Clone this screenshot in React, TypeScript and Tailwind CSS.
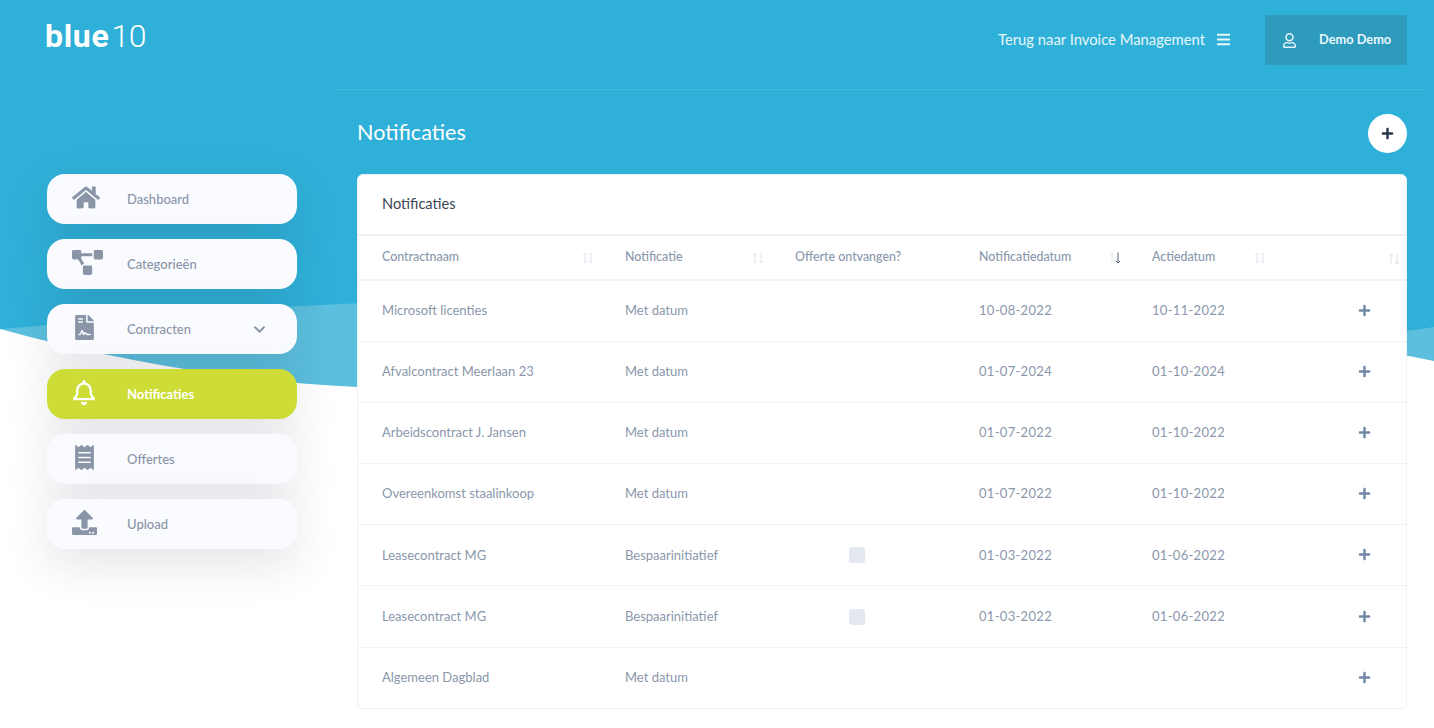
import React from 'react';
import {
  FaBars,
  FaChevronDown,
  FaFileContract,
  FaHome,
  FaPlus,
  FaProjectDiagram,
  FaReceipt,
  FaRegBell,
  FaRegUser,
  FaUpload
} from 'react-icons/fa';

const navItems = [
  { label: 'Dashboard', icon: <FaHome className="h-[25px] w-[28px] shrink-0" /> },
  { label: 'Categorieën', icon: <FaProjectDiagram className="h-[25px] w-[31px] shrink-0" /> },
  { label: 'Contracten', icon: <FaFileContract className="ml-[3px] h-[25px] w-[19px] shrink-0" />, hasChevron: true },
  { label: 'Notificaties', icon: <FaRegBell className="ml-[1px] h-[25px] w-[22px] shrink-0" />, active: true },
  { label: 'Offertes', icon: <FaReceipt className="ml-[3px] h-[25px] w-[19px] shrink-0" /> },
  { label: 'Upload', icon: <FaUpload className="h-[25px] w-[25px] shrink-0" /> }
];

const rows = [
  { name: 'Microsoft licenties', type: 'Met datum', notify: '10-08-2022', action: '10-11-2022' },
  { name: 'Afvalcontract Meerlaan 23', type: 'Met datum', notify: '01-07-2024', action: '01-10-2024' },
  { name: 'Arbeidscontract J. Jansen', type: 'Met datum', notify: '01-07-2022', action: '01-10-2022' },
  { name: 'Overeenkomst staalinkoop', type: 'Met datum', notify: '01-07-2022', action: '01-10-2022' },
  { name: 'Leasecontract MG', type: 'Bespaarinitiatief', quote: true, notify: '01-03-2022', action: '01-06-2022' },
  { name: 'Leasecontract MG', type: 'Bespaarinitiatief', quote: true, notify: '01-03-2022', action: '01-06-2022' },
  { name: 'Algemeen Dagblad', type: 'Met datum', notify: '', action: '' }
];

const SortIcon: React.FC<{ active?: boolean }> = ({ active }) => (
  <svg width="12" height="12" viewBox="0 0 12 12" fill="none" strokeWidth="1">
    <path d="M3 11.5V1M0.8 3.2 3 1l2.2 2.2" stroke="#dfe5ec" />
    <path d="M9 .5V11M6.8 8.8 9 11l2.2-2.2" stroke={active ? '#56657a' : '#dfe5ec'} />
  </svg>
);

const HeaderCell: React.FC<{ label?: string; width: string; sort?: boolean; active?: boolean; padLeft?: string }> = ({
  label,
  width,
  sort = true,
  active,
  padLeft = 'pl-[25px]'
}) => (
  <th className={`${width} p-0 text-left text-[12.4px] font-medium`}>
    <div className={`flex items-center justify-between pr-[6px] ${padLeft}`}>
      <span>{label}</span>
      {sort && (
        <span className="mt-[2px]">
          <SortIcon active={active} />
        </span>
      )}
    </div>
  </th>
);

export default function App() {
  return (
    <div className="relative min-h-screen overflow-hidden bg-white [font-family:Lato,sans-serif]">
      {/* wave behind the page */}
      <svg className="absolute inset-0 h-[728px] w-[1434px]" viewBox="0 0 1434 728">
        <rect width="1434" height="400" fill="#5bbfdd" />
        <path d="M0 0H1434V327C1300 350 1100 330 900 315 700 300 500 295 300 306 180 313 80 322 0 329Z" fill="#2fb0d8" />
        <path d="M0 329C120 362 240 381 357 387 600 398 900 310 1100 318 1220 323 1330 340 1434 361V728H0Z" fill="#fff" />
      </svg>

      <div className="relative flex">
        <aside className="w-[336px] shrink-0">
          <div className="flex h-[174px] items-start pl-[45px] pt-[14px] text-[32px] leading-[44px] text-white [font-family:Roboto,sans-serif]">
            <span className="font-bold tracking-[0.7px]">blue</span>
            <span className="ml-[2px] font-light tracking-[-0.5px]">10</span>
          </div>
          <nav className="flex flex-col gap-[15px] pl-[47px]">
            {navItems.map((item) => (
              <div
                key={item.label}
                className={`flex h-[50px] w-[250px] items-center rounded-[18px] shadow-[0_15px_45px_rgba(40,50,70,0.13)] ${
                  item.active ? 'bg-[#cddc37] text-white' : 'bg-[#fafbff] text-[#8a95a8]'
                }`}
              >
                <span className="mb-[3px] ml-[25px] flex w-[25px]">{item.icon}</span>
                <span className={`ml-[30px] mt-[1px] text-[13px] ${item.active ? 'font-bold' : 'font-medium'}`}>{item.label}</span>
                {item.hasChevron && <FaChevronDown size={13} className="ml-auto mr-[31px]" />}
              </div>
            ))}
          </nav>
        </aside>

        <main className="min-w-0 flex-1 pr-[7px]">
          <header className="flex h-[90px] items-start justify-end border-b border-[#45b9dc] pr-[20px] pt-[15px] text-white">
            <div className="mr-[34px] flex h-[50px] items-center gap-[11px] text-[14.8px] text-[#e8f7fc]">
              <span className="-mt-[2px]">Terug naar Invoice Management</span>
              <FaBars size={15} className="-mt-[2px]" />
            </div>
            <div className="flex h-[50px] w-[142px] items-center bg-[#2e9bbd] pl-[17px] text-[12.8px] font-bold text-[#e8f7fc]">
              <FaRegUser size={15} />
              <span className="ml-[22px]">Demo Demo</span>
            </div>
          </header>

          <div className="pl-[21px] pr-[20px]">
            <div className="flex h-[84px] items-center justify-between">
              <h1 className="text-[21.6px] font-normal text-white">Notificaties</h1>
              <button className="mt-[2px] flex h-[39px] w-[39px] items-center justify-center rounded-full bg-white text-[#28354a]">
                <FaPlus size={13} />
              </button>
            </div>

            <div className="rounded-[6px] border border-[#edf0f5] bg-white">
              <div className="flex h-[61px] items-center border-b-2 border-[#eef2f7] pb-[1px] pl-[24px] text-[14.6px] text-[#3c4655]">
                Notificaties
              </div>
              <table className="w-full table-fixed border-collapse text-[13px] text-[#8a97ab]">
                <thead>
                  <tr className="h-[44px] border-b-2 border-[#eef2f7]">
                    <HeaderCell label="Contractnaam" width="w-[242px]" padLeft="pl-[24px]" />
                    <HeaderCell label="Notificatie" width="w-[170px]" />
                    <HeaderCell label="Offerte ontvangen?" width="w-[184px]" sort={false} />
                    <HeaderCell label="Notificatiedatum" width="w-[173px]" active />
                    <HeaderCell label="Actiedatum" width="w-[145px]" />
                    <HeaderCell width="w-auto" />
                  </tr>
                </thead>
                <tbody>
                  {rows.map((row, i) => (
                    <tr key={i} className="h-[61.2px] border-b border-[#f0f2f6] last:border-b-0">
                      <td className="p-0 pl-[24px]">{row.name}</td>
                      <td className="p-0 pl-[25px]">{row.type}</td>
                      <td className="p-0 pl-[25px]">
                        {row.quote && <div className="ml-[54px] h-[16px] w-[16px] rounded-[3px] bg-[#e3e8f1]" />}
                      </td>
                      <td className="p-0 pl-[25px] tracking-[0.3px]">{row.notify}</td>
                      <td className="p-0 pl-[25px] tracking-[0.3px]">{row.action}</td>
                      <td className="p-0 pr-[35px] text-[#6f88a8]">
                        <FaPlus size={13} className="mb-[1px] ml-auto" />
                      </td>
                    </tr>
                  ))}
                </tbody>
              </table>
            </div>
          </div>
        </main>
      </div>
    </div>
  );
}
